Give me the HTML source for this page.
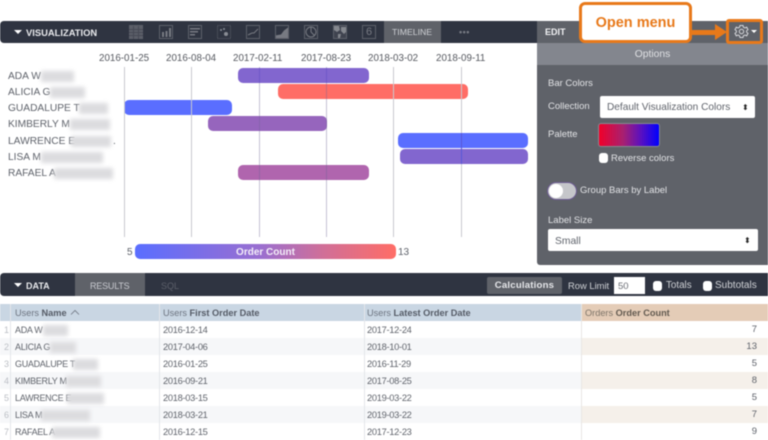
<!DOCTYPE html>
<html><head><meta charset="utf-8"><style>
html,body{margin:0;padding:0;background:#fff}
#p{position:relative;width:768px;height:440px;overflow:hidden;background:#fff;font-family:"Liberation Sans",sans-serif;font-size:9.500px;color:#5f636b;filter:blur(.45px)}
#p div{position:absolute}
.t{white-space:nowrap;line-height:14px;margin-top:1px}
.b{border-radius:5px}
.g{background:#c8c9cf;width:1px;top:67px;height:170px}
.bl{height:11px;background:#dcdcdf;filter:blur(2.2px);margin-top:1px;margin-left:-3px;padding-right:3px}
.cb{background:#fff;border-radius:3px;width:9px;height:10px}
.c{color:#e2e3e6}
.sel{background:#fff;border-radius:2px}
.r{left:0;width:768px;height:17px}
.ix{color:#bcbfc5;font-size:9px}
.ax{top:51px;color:#55585f;font-size:9.800px}
#p .n{left:8px;font-size:10.200px;margin-top:2px}
.d{font-size:9.300px;letter-spacing:-.3px}
.m{font-size:9px;letter-spacing:-.3px;left:15px}
.v{left:729px;width:28px;text-align:right;font-size:9.500px}
.h{top:305px;font-size:9.200px;color:#6d7480}
.h b{color:#555b66}
</style></head><body><div id="p">
<div style="left:0;top:21px;width:537px;height:22px;background:#2f3441;border-radius:4px 0 0 4px"></div>
<div style="left:14px;top:30px;width:0;height:0;border:4px solid transparent;border-top:4px solid #fff;border-bottom:0"></div>
<div class="t" style="left:26px;top:25px;color:#e8e9ec;font-weight:bold;font-size:9.400px">VISUALIZATION</div>
<svg style="position:absolute;left:125px;top:22px" width="260" height="20" fill="none" stroke="#5d606a" stroke-width="1">
<rect x="4.500" y="3.500" width="13" height="13" fill="#5b5e68"/><path d="M4 7.500h14M4 10.500h14M4 13.500h14M8.500 4v13M13.500 4v13" stroke="#474a55"/>
<rect x="34.500" y="3.500" width="13" height="13"/><path d="M37 15h2v-5h-2zM40.500 15h2v-6h-2zM44 15h2V6h-2z" fill="#777a82" stroke="none"/>
<rect x="63.500" y="3.500" width="13" height="13"/><path d="M65 6h10v1.500H65zM65 9h8v1.500h-8zM65 12h5v1.500h-5z" fill="#777a82" stroke="none"/>
<rect x="92.500" y="3.500" width="13" height="13" stroke-dasharray="1 1"/><circle cx="101" cy="12" r="2" fill="#8a8d95" stroke="none"/><circle cx="96" cy="8" r="1" fill="#8a8d95" stroke="none"/><circle cx="99" cy="7" r="1" fill="#8a8d95" stroke="none"/>
<rect x="121.500" y="3.500" width="13" height="13"/><path d="M123 13l4-2 2 0 4-4" stroke="#777a82"/>
<path d="M150 16.500h13v-11l-4 3-3 4-6 1z" fill="#777a82" stroke="none"/><rect x="150.500" y="3.500" width="13" height="13"/>
<rect x="179.500" y="3.500" width="13" height="13"/><circle cx="186" cy="10" r="5" stroke="#777a82"/><path d="M186 10V5M186 10l3.500 3.500" stroke="#777a82"/>
<rect x="208.500" y="3.500" width="13" height="13" fill="#3f434f"/><path d="M209 4h5l1 4-3 2-3-2zM216 5h5v5l-2 2-3-3zM213 12h3l-1 4h-2z" fill="#85888f" stroke="none"/>
<rect x="237.500" y="3.500" width="13" height="13"/>
</svg>
<div class="t" style="top:24px;font-size:11px;color:#777a83;width:8px;text-align:center;left:365px">6</div>
<div style="left:384px;top:21px;width:57px;height:22px;background:#5f6269"></div>
<div class="t" style="left:392px;top:24px;color:#cfd1d5;font-size:8.700px">TIMELINE</div>
<div class="t" style="left:459px;top:24px;color:#777a83;font-size:9px;font-weight:bold;letter-spacing:.5px">•••</div>

<div class="t ax" style="left:99px">2016-01-25</div>
<div class="t ax" style="left:166px">2016-08-04</div>
<div class="t ax" style="left:233px">2017-02-11</div>
<div class="t ax" style="left:301px">2017-08-23</div>
<div class="t ax" style="left:368px">2018-03-02</div>
<div class="t ax" style="left:436px">2018-09-11</div>

<div class="b" style="left:238px;top:68px;width:131px;height:14.500px;background:#8266cf"></div>
<div class="b" style="left:278px;top:84px;width:190px;height:14.500px;background:#ff6d66"></div>
<div class="b" style="left:124px;top:100px;width:108px;height:14.500px;background:#5a6eff"></div>
<div class="b" style="left:208px;top:116px;width:119px;height:14.500px;background:#9665bd"></div>
<div class="b" style="left:398px;top:133px;width:130px;height:14.500px;background:#5a6eff"></div>
<div class="b" style="left:400px;top:149px;width:128px;height:14.500px;background:#8266cf"></div>
<div class="b" style="left:238px;top:165px;width:131px;height:14.500px;background:#b065ae"></div>

<div class="g" style="left:124px"></div><div class="g" style="left:191px"></div>
<div class="g" style="left:259px;background:rgba(110,100,150,.4)"></div><div class="g" style="left:326px;background:rgba(110,100,150,.4)"></div>
<div class="g" style="left:393px"></div><div class="g" style="left:461px"></div>
<div class="g" style="left:259px;top:68px;height:15px;background:#6f58c8"></div>
<div class="g" style="left:326px;top:68px;height:15px;background:#6f58c8"></div>
<div class="g" style="left:461px;top:133px;height:31px;background:#5858d8"></div>

<div class="t n" style="top:68px">ADA W</div><div class="bl" style="left:44px;top:70px;width:30px"></div>
<div class="t n" style="top:84px">ALICIA G</div><div class="bl" style="left:53px;top:86px;width:32px"></div>
<div class="t n" style="top:100px">GUADALUPE T</div><div class="bl" style="left:82px;top:102px;width:26px"></div>
<div class="t n" style="top:116px">KIMBERLY M</div><div class="bl" style="left:73px;top:118px;width:37px"></div>
<div class="t n" style="top:133px">LAWRENCE E</div><div class="bl" style="left:74px;top:135px;width:37px"></div><div class="t n" style="left:113px;top:133px">.</div>
<div class="t n" style="top:149px">LISA M</div><div class="bl" style="left:44px;top:151px;width:59px"></div>
<div class="t n" style="top:165px">RAFAEL A</div><div class="bl" style="left:57px;top:167px;width:56px"></div>

<div class="t" style="left:127px;top:245px;font-size:10px">5</div>
<div style="left:135px;top:244px;width:261px;height:15px;border-radius:5px;background:linear-gradient(90deg,#5a6eff,#9a6fd0 48%,#d06f98 72%,#ff6d66)"></div>
<div class="t" style="left:135px;top:245px;width:261px;text-align:center;color:#f4eef8;font-weight:bold;font-size:10px">Order Count</div>
<div class="t" style="left:398px;top:245px;font-size:10px">13</div>

<div style="left:537px;top:21px;width:231px;height:244px;background:#5f6269;border-radius:0 0 0 3px"></div>
<div style="left:537px;top:43px;width:231px;height:22px;background:#83868e"></div>
<div class="t" style="left:545px;top:24px;color:#f2f2f4;font-weight:bold;font-size:9px">EDIT</div>
<div class="t" style="left:537px;top:47px;width:231px;text-align:center;color:#dfe0e3;font-size:10.300px">Options</div>
<div class="t c" style="left:548px;top:76px">Bar Colors</div>
<div class="t c" style="left:548px;top:99px">Collection</div>
<div class="sel" style="left:600px;top:96px;width:155px;height:22px"></div>
<div class="t" style="left:607px;top:100px;font-size:10.100px">Default Visualization Colors</div>
<div class="t" style="left:742px;top:100px;color:#222;font-size:8px">⬍</div>
<div class="t c" style="left:548px;top:127px">Palette</div>
<div style="left:598px;top:123px;width:60px;height:22px;border:1px solid #85888f;border-radius:3px;background:linear-gradient(90deg,#f0002a,#a82070 40%,#5a10c0 70%,#0000ff)"></div>
<div class="cb" style="left:599px;top:153px"></div>
<div class="t c" style="left:611px;top:151px">Reverse colors</div>
<div style="left:548px;top:183px;width:28px;height:16px;border-radius:8px;background:#c5c6ca;box-shadow:0 0 0 1px #6b5a90"></div>
<div style="left:549px;top:184px;width:14px;height:14px;border-radius:7px;background:#fff"></div>
<div class="t c" style="left:580px;top:183px">Group Bars by Label</div>
<div class="t c" style="left:548px;top:213px">Label Size</div>
<div class="sel" style="left:548px;top:229px;width:210px;height:22px"></div>
<div class="t" style="left:555px;top:234px;font-size:10.300px">Small</div>
<div class="t" style="left:744px;top:233px;color:#222;font-size:8px">⬍</div>

<div style="left:579px;top:2px;width:113px;height:41px;box-sizing:border-box;border:3px solid #e8791a;border-radius:6px;background:#fff"></div>
<div class="t" style="left:579px;top:14px;width:113px;text-align:center;color:#e8791a;font-weight:bold;font-size:14.500px;line-height:16px">Open menu</div>
<div style="left:692px;top:30px;width:24px;height:5px;background:#e8791a"></div>
<div style="left:715px;top:24px;width:0;height:0;border-left:12px solid #e8791a;border-top:8.500px solid transparent;border-bottom:8.500px solid transparent"></div>
<div style="left:726px;top:19px;width:37px;height:25px;box-sizing:border-box;border:3px solid #e8791a;border-radius:3px"></div>
<svg style="position:absolute;left:734px;top:24px" width="15" height="15" viewBox="0 0 15 15" fill="none" stroke="#d8d9dd" stroke-width="1"><path d="M6 1.500h3l.5 1.800 1.500.7 1.700-.8 1.300 2.400-1.400 1.200v1.400l1.400 1.200-1.300 2.400-1.700-.8-1.500.7-.5 1.800H6l-.5-1.800-1.500-.7-1.700.8L1 9.400l1.400-1.200V6.800L1 5.600l1.300-2.400 1.700.8 1.500-.7z"/><circle cx="7.500" cy="7.500" r="2.200"/></svg>
<div style="left:751px;top:30px;width:0;height:0;border:3.500px solid transparent;border-top:3.500px solid #fff;border-bottom:0"></div>

<div style="left:0;top:273px;width:768px;height:23px;background:#2f3441;border-radius:4px 0 0 4px"></div>
<div style="left:75px;top:273px;width:70px;height:23px;background:#5f6269"></div>
<div style="left:14px;top:283px;width:0;height:0;border:4px solid transparent;border-top:4px solid #fff;border-bottom:0"></div>
<div class="t" style="left:26px;top:278px;color:#e8e9ec;font-weight:bold;font-size:9px">DATA</div>
<div class="t" style="left:90px;top:278px;color:#c8cad0;font-size:9px;letter-spacing:-.2px">RESULTS</div>
<div class="t" style="left:161px;top:278px;color:#5c5f6a;font-size:9px">SQL</div>
<div style="left:487px;top:277px;width:75px;height:17px;background:#5f6269;border-radius:2px"></div>
<div class="t" style="left:487px;top:278px;width:75px;text-align:center;color:#e6e7ea;font-weight:bold;font-size:9.600px;letter-spacing:.2px">Calculations</div>
<div class="t" style="left:568px;top:278px;color:#d0d2d6;font-size:9.400px">Row Limit</div>
<div style="left:614px;top:277px;width:31px;height:17px;background:#fff"></div>
<div class="t" style="left:618px;top:279px;font-size:9.500px;color:#6a6d74">50</div>
<div class="cb" style="left:653px;top:281px"></div>
<div class="t" style="left:666px;top:278px;color:#d0d2d6;font-size:9.800px">Totals</div>
<div class="cb" style="left:703px;top:281px"></div>
<div class="t" style="left:715px;top:278px;color:#d0d2d6;font-size:10px">Subtotals</div>

<div style="left:0;top:304px;width:581px;height:17px;background:#c9d6e3"></div>
<div style="left:581px;top:304px;width:187px;height:17px;background:#e4ccb7"></div>
<div class="r" style="top:338px;background:#f6f7f9"></div>
<div class="r" style="top:372px;background:#f6f7f9"></div>
<div class="r" style="top:406px;background:#f6f7f9"></div>
<div style="left:581px;top:338px;width:187px;height:17px;background:#f5f0ea"></div>
<div style="left:581px;top:372px;width:187px;height:17px;background:#f5f0ea"></div>
<div style="left:581px;top:406px;width:187px;height:17px;background:#f5f0ea"></div>
<div style="left:10px;top:304px;width:1px;height:136px;background:#e4e6ea"></div>
<div style="left:159px;top:304px;width:1px;height:136px;background:#e4e6ea"></div>
<div style="left:364px;top:304px;width:1px;height:136px;background:#e4e6ea"></div>
<div style="left:581px;top:304px;width:1px;height:136px;background:#e8e6e4"></div>

<div class="t h" style="left:15px">Users <b>Name</b></div>
<svg style="position:absolute;left:70px;top:309px" width="10" height="6" fill="none" stroke="#6d7480" stroke-width=".8"><path d="M1 5.500L5 1.500l4 4"/></svg>
<div class="t h" style="left:163px">Users <b>First Order Date</b></div>
<div class="t h" style="left:367px">Users <b>Latest Order Date</b></div>
<div class="t h" style="left:585px;color:#7d7468">Orders <b style="color:#625a50">Order Count</b></div>

<div class="t ix" style="left:4px;top:322px">1</div><div class="t m" style="top:322px">ADA W</div><div class="bl" style="left:46px;top:324px;width:22px"></div><div class="t d" style="left:163px;top:322px">2016-12-14</div><div class="t d" style="left:367px;top:322px">2017-12-24</div><div class="t v" style="top:322px">7</div>
<div class="t ix" style="left:4px;top:339px">2</div><div class="t m" style="top:339px">ALICIA G</div><div class="bl" style="left:53px;top:341px;width:23px"></div><div class="t d" style="left:163px;top:339px">2017-04-06</div><div class="t d" style="left:367px;top:339px">2018-10-01</div><div class="t v" style="top:339px">13</div>
<div class="t ix" style="left:4px;top:356px">3</div><div class="t m" style="top:356px">GUADALUPE T</div><div class="bl" style="left:76px;top:358px;width:22px"></div><div class="t d" style="left:163px;top:356px">2016-01-25</div><div class="t d" style="left:367px;top:356px">2016-11-29</div><div class="t v" style="top:356px">5</div>
<div class="t ix" style="left:4px;top:373px">4</div><div class="t m" style="top:373px">KIMBERLY M</div><div class="bl" style="left:69px;top:375px;width:32px"></div><div class="t d" style="left:163px;top:373px">2016-09-21</div><div class="t d" style="left:367px;top:373px">2017-08-25</div><div class="t v" style="top:373px">8</div>
<div class="t ix" style="left:4px;top:390px">5</div><div class="t m" style="top:390px">LAWRENCE E</div><div class="bl" style="left:70px;top:392px;width:34px"></div><div class="t d" style="left:163px;top:390px">2018-03-15</div><div class="t d" style="left:367px;top:390px">2019-03-22</div><div class="t v" style="top:390px">5</div>
<div class="t ix" style="left:4px;top:407px">6</div><div class="t m" style="top:407px">LISA M</div><div class="bl" style="left:44px;top:409px;width:46px"></div><div class="t d" style="left:163px;top:407px">2018-03-21</div><div class="t d" style="left:367px;top:407px">2019-03-22</div><div class="t v" style="top:407px">7</div>
<div class="t ix" style="left:4px;top:424px">7</div><div class="t m" style="top:424px">RAFAEL A</div><div class="bl" style="left:55px;top:426px;width:45px"></div><div class="t d" style="left:163px;top:424px">2016-12-15</div><div class="t d" style="left:367px;top:424px">2017-12-23</div><div class="t v" style="top:424px">9</div>
</div></body></html>
